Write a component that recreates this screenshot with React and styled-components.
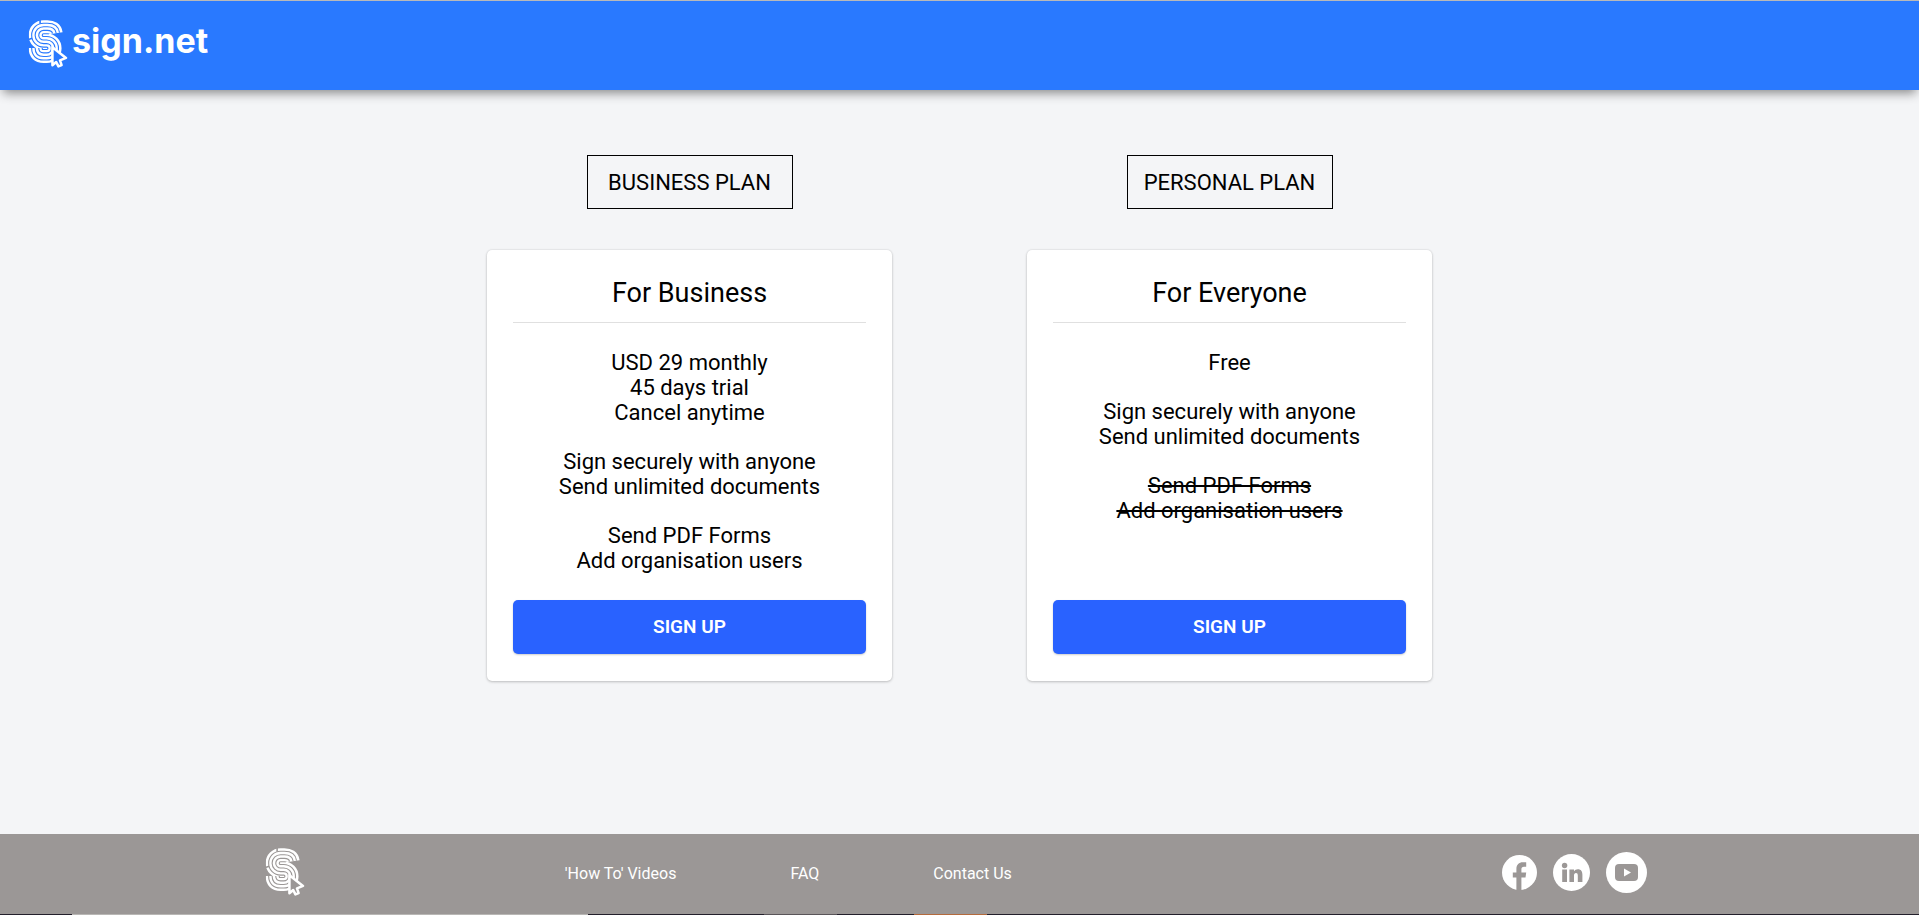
import styled, { createGlobalStyle } from 'styled-components';

const business = [
    ['USD 29 monthly', '45 days trial', 'Cancel anytime'],
    ['Sign securely with anyone', 'Send unlimited documents'],
    ['Send PDF Forms', 'Add organisation users'],
];

const personal = [
    ['Free'],
    ['Sign securely with anyone', 'Send unlimited documents'],
    ['Send PDF Forms', 'Add organisation users'],
];

const S_CURVE = 'M80 40 Q78 25 58 25 H46 A21 21 0 0 0 46 67 H56 A20.5 20.5 0 0 1 56 108 H46 Q25 108 25 87';
const POINTER = 'M74 84 V141 L86 131 L93 145 L103 141 L98 126 L117 118 Z';

function Fingerprint({ id }){
    return(
        <Mark viewBox="-2 -2 124 152" aria-hidden="true">
            <mask id={id} maskUnits="userSpaceOnUse" x="-2" y="-2" width="124" height="152">
                <g fill="none" strokeLinejoin="round">
                    <path d={S_CURVE} stroke="#fff" strokeWidth="53" />
                    <path d={S_CURVE} stroke="#000" strokeWidth="37" />
                    <path d={S_CURVE} stroke="#fff" strokeWidth="30" />
                    <path d={S_CURVE} stroke="#000" strokeWidth="15" />
                    <path d={S_CURVE} stroke="#fff" strokeWidth="8" />
                    <path d="M35 -2 V10 M-2 60 L10 56 M92 44 L108 50" stroke="#000" strokeWidth="5" />
                </g>
                <path d={POINTER} fill="#000" />
            </mask>
            <rect x="-2" y="-2" width="124" height="152" fill="#fff" mask={`url(#${id})`} />
            <path d={POINTER} fill="none" stroke="#fff" strokeWidth="8" strokeLinejoin="round" />
        </Mark>
    )
}

function Plan({ label, title, groups, struck }){
    return(
        <Column>
            <PlanLabel>{label}</PlanLabel>
            <Card>
                <CardTitle>{title}</CardTitle>
                <Features>
                    {groups.map((group, i) => (
                        <Group key={i} $struck={i === struck}>
                            {group.map(line => <li key={line}>{line}</li>)}
                        </Group>
                    ))}
                </Features>
                <SignUp type="button">SIGN UP</SignUp>
            </Card>
        </Column>
    )
}

export default function App(){
    return(
        <>
            <GlobalStyle />
            <Page>
                <Header>
                    <Brand href="#">
                        <Fingerprint id="header-mark" />
                        <BrandName>sign.net</BrandName>
                    </Brand>
                </Header>
                <Plans>
                    <Plan label="BUSINESS PLAN" title="For Business" groups={business} />
                    <Plan label="PERSONAL PLAN" title="For Everyone" groups={personal} struck={2} />
                </Plans>
                <Footer>
                    <Fingerprint id="footer-mark" />
                    <Links>
                        <a href="#">'How To' Videos</a>
                        <a href="#">FAQ</a>
                        <a href="#">Contact Us</a>
                    </Links>
                    <Social>
                        <SocialLink href="#" aria-label="Facebook" $size={35}>
                            <svg viewBox="0 0 35 35">
                                <circle cx="17.5" cy="17.5" r="17.5" fill="#fff" />
                                <path d="M14.4 35 V22.5 H10.8 V17.5 H14.4 V14 C14.4 9.6 17 7.3 20.8 7.3 H24.2 V11.8 H22 C20.1 11.8 19.4 12.8 19.4 14.4 V17.5 H24.2 L23.5 22.5 H19.4 V35 Z" fill="#9b9796" />
                            </svg>
                        </SocialLink>
                        <SocialLink href="#" aria-label="LinkedIn" $size={37}>
                            <svg viewBox="0 0 37 37">
                                <circle cx="18.5" cy="18.5" r="18.5" fill="#fff" />
                                <g fill="#9b9796">
                                    <circle cx="11.6" cy="11.5" r="2.7" />
                                    <path d="M9.2 15.5 H14 V28 H9.2 Z M16.4 15.5 H21 V17.2 C21.8 15.9 23.2 15.2 24.9 15.2 C28 15.2 29.4 17.3 29.4 20.8 V28 H24.8 V21.6 C24.8 19.9 24.2 19.1 23 19.1 C21.7 19.1 21 20 21 21.6 V28 H16.4 Z" />
                                </g>
                            </svg>
                        </SocialLink>
                        <SocialLink href="#" aria-label="YouTube" $size={41}>
                            <svg viewBox="0 0 41 41">
                                <circle cx="20.5" cy="20.5" r="20.5" fill="#fff" />
                                <rect x="9" y="12" width="23" height="17" rx="4" fill="#9b9796" />
                                <path d="M18 16.5 L25 20.5 L18 24.5 Z" fill="#fff" />
                            </svg>
                        </SocialLink>
                    </Social>
                </Footer>
                <BottomEdge />
            </Page>
        </>
    )
}

const GlobalStyle = createGlobalStyle`
    * {
        box-sizing: border-box;
    }
    body {
        margin: 0;
        background-color: #f4f5f7;
        color: #000;
        font-family: Roboto, sans-serif;
    }
    a {
        color: inherit;
        text-decoration: none;
    }
`

const Page = styled.div`
    min-height: 100vh;
    display: flex;
    flex-direction: column;
`

const Header = styled.header`
    height: 90px;
    padding: 0 28px;
    border-top: 1px solid #b9b9b9;
    background-color: #2979ff;
    box-shadow: 0 6px 10px -3px rgba(0, 0, 0, 0.45);
    display: flex;
    align-items: center;
`

const Mark = styled.svg`
    width: 40px;
    height: 48px;
    flex-shrink: 0;
`

const Brand = styled.a`
    display: flex;
    align-items: center;
    gap: 4px;
    padding-bottom: 4px;
`

const BrandName = styled.span`
    color: #fff;
    font-family: Inter, sans-serif;
    font-size: 34px;
    font-weight: 700;
    line-height: 48px;
    padding-bottom: 6px;
`

const Plans = styled.main`
    width: 100%;
    max-width: 1080px;
    margin: 0 auto;
    padding: 65px 0 40px;
    flex: 1;
    display: grid;
    grid-template-columns: 1fr 1fr;
    align-items: start;
`

const Column = styled.section`
    display: flex;
    flex-direction: column;
    align-items: center;
    gap: 41px;
`

const PlanLabel = styled.h2`
    margin: 0;
    width: 206px;
    border: 1px solid #000;
    padding: 14px 0 13px;
    font-size: 22px;
    font-weight: 400;
    line-height: 25px;
    text-align: center;
`

const Card = styled.div`
    width: 75%;
    min-height: 431px;
    padding: 27px 26px;
    border-radius: 5px;
    background-color: #fff;
    box-shadow: 0 1px 3px rgba(0, 0, 0, 0.2), 0 0 2px rgba(0, 0, 0, 0.12);
    display: flex;
    flex-direction: column;
    text-align: center;
`

const CardTitle = styled.h3`
    margin: 0;
    padding: 1px 0 13px;
    border-bottom: 1px solid #e0e0e0;
    font-size: 27px;
    font-weight: 400;
    line-height: 31px;
`

const Features = styled.div`
    padding-top: 27px;
    flex: 1;
    display: flex;
    flex-direction: column;
    gap: 24px;
    font-size: 22px;
    line-height: 25px;
`

const Group = styled.ul`
    margin: 0;
    padding: 0;
    list-style: none;
    text-decoration: ${props => props.$struck ? 'line-through' : 'none'};
`

const SignUp = styled.button`
    height: 54px;
    padding: 0 0 2px;
    border: none;
    border-radius: 5px;
    background-color: #2962ff;
    box-shadow: 0 1px 2px rgba(0, 0, 0, 0.2);
    color: #fff;
    font-family: inherit;
    font-size: 19px;
    font-weight: 600;
    cursor: pointer;
`

const Footer = styled.footer`
    height: 80px;
    padding: 0 14.2% 4px 13.8%;
    background-color: #9b9796;
    color: #fff;
    display: flex;
    align-items: center;
`

const Links = styled.nav`
    margin-left: 260px;
    padding-top: 4px;
    display: flex;
    gap: 114px;
    font-size: 16px;
    line-height: 20px;
`

const Social = styled.div`
    margin-left: auto;
    display: flex;
    align-items: center;
    gap: 16px;
`

const SocialLink = styled.a`
    display: flex;
    width: ${props => props.$size}px;
    height: ${props => props.$size}px;

    svg {
        width: 100%;
        height: 100%;
    }
`

const BottomEdge = styled.div`
    height: 1px;
    background: linear-gradient(
        90deg,
        #231f2b 72px,
        #b9b7b5 72px 588px,
        #231f2b 588px 764px,
        #5a5559 764px 837px,
        #231f2b 837px 914px,
        #b46a3c 914px 987px,
        #231f2b 987px
    );
`
